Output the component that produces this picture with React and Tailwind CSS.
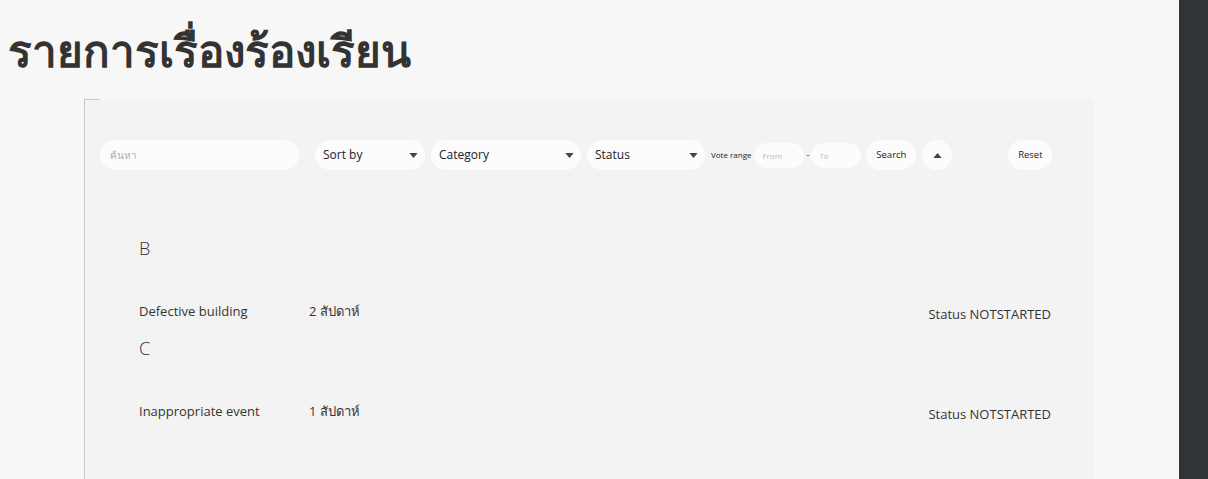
import { useState } from 'react';

const groups = [
  { letter: 'B', items: [{ name: 'Defective building', age: '2 สัปดาห์', status: 'NOTSTARTED' }] },
  { letter: 'C', items: [{ name: 'Inappropriate event', age: '1 สัปดาห์', status: 'NOTSTARTED' }] },
];

function Caret({ up }) {
  return (
    <svg width="9" height="5" viewBox="0 0 10 6" className="shrink-0">
      <path d={up ? 'M0 6 L5 0 L10 6 Z' : 'M0 0 L10 0 L5 6 Z'} fill="#444" />
    </svg>
  );
}

function Select({ label, width }) {
  return (
    <div className={`flex h-[30px] items-center justify-between rounded-full bg-[#fcfcfc] pl-2 pr-[7px] text-[12px] text-[#222] ${width}`}>
      <span>{label}</span>
      <Caret />
    </div>
  );
}

export default function App() {
  const [query, setQuery] = useState('');

  return (
    <div className="flex min-h-[479px] bg-[#f7f7f7] font-['Open_Sans','Noto_Sans',sans-serif] text-[#333]">
      <div className="flex-1">
        <h1 className="pl-[8px] pt-[22px] text-[44px] font-bold leading-[56px] text-[#333]">
          รายการเรื่องร้องเรียน
        </h1>
        <div className="relative ml-[84px] mr-[85px] mt-[21px] min-h-[380px] border-l border-[#c8c8c8] bg-[#f3f3f3] pb-10">
          <span className="absolute left-0 top-0 h-px w-[15px] bg-[#c8c8c8]" />
          <div className="flex items-center pl-[15px] pt-[41px]">
            <input
              value={query}
              onChange={(e) => setQuery(e.target.value)}
              placeholder="ค้นหา"
              className="h-[30px] w-[199px] rounded-full bg-[#fcfcfc] px-2.5 text-[10px] outline-none placeholder:text-[#aaa]"
            />
            <div className="ml-4 flex gap-1.5">
              <Select label="Sort by" width="w-[110px]" />
              <Select label="Category" width="w-[150px]" />
              <Select label="Status" width="w-[118px]" />
            </div>
            <span className="ml-[6px] text-[8px] text-[#222]">Vote range</span>
            <input placeholder="From" className="ml-[3px] h-[25px] w-[50px] rounded-full bg-[#fcfcfc] px-2 text-[8px] outline-none placeholder:text-[#bbb]" />
            <span className="mx-[2px] text-[9px]">-</span>
            <input placeholder="To" className="h-[25px] w-[50px] rounded-full bg-[#fcfcfc] px-2 text-[8px] outline-none placeholder:text-[#bbb]" />
            <button className="ml-[5px] h-[30px] w-[50px] rounded-full bg-[#fcfcfc] text-[9.5px] text-[#222]">Search</button>
            <button className="ml-[6px] flex h-[30px] w-[30px] items-center justify-center rounded-full bg-[#fcfcfc]">
              <Caret up />
            </button>
            <button className="ml-[56px] h-[30px] w-[44px] rounded-full bg-[#fcfcfc] text-[9.5px] text-[#222]">Reset</button>
          </div>

          <div className="pl-[54px] pr-[43px] pt-[68px]">
            {groups.map((g) => (
              <div key={g.letter}>
                <div className="text-[18px] font-light leading-[20px]">{g.letter}</div>
                {g.items.map((it) => (
                  <div key={it.name} className="mt-[45px] flex h-[35px] text-[13px] text-[#333]">
                    <span className="w-[170px] leading-[16px]">{it.name}</span>
                    <span className="leading-[16px]">{it.age}</span>
                    <span className="ml-auto mt-[3px] leading-[16px]">Status {it.status}</span>
                  </div>
                ))}
              </div>
            ))}
          </div>
        </div>
      </div>
      <div className="w-[29px] shrink-0 bg-[#303338]" />
    </div>
  );
}
